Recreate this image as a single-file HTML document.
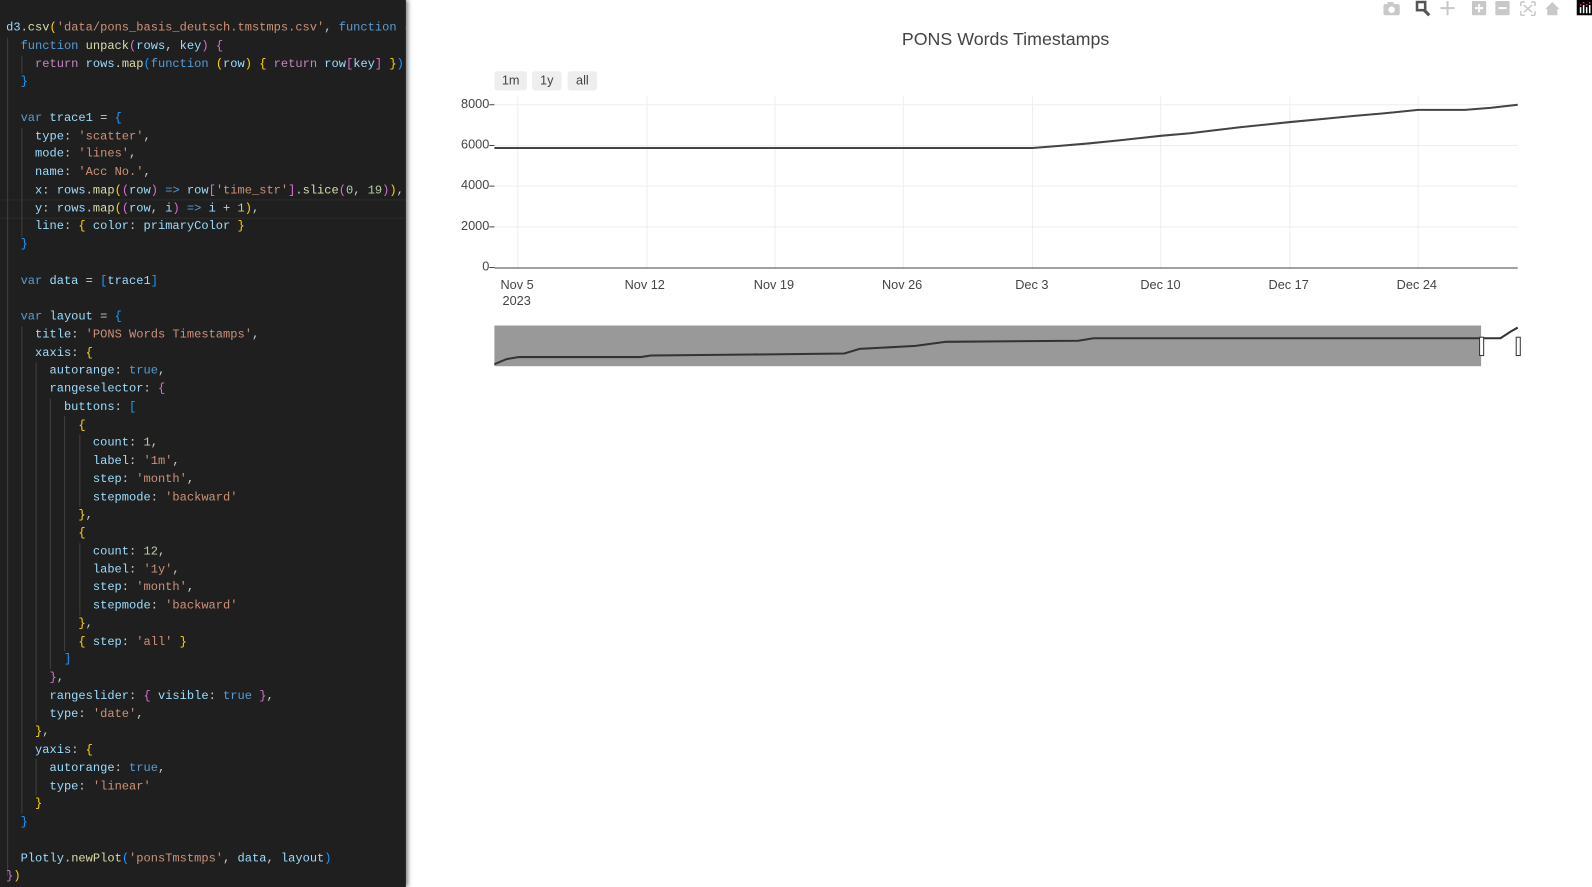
<!DOCTYPE html>
<html><head><meta charset="utf-8"><style>
html,body{margin:0;width:1592px;height:887px;overflow:hidden;background:#fff}
#wrap{position:absolute;left:0;top:0;width:1565px;height:872px;transform:scale(1.01725);transform-origin:0 0;font-family:"Liberation Sans",sans-serif}
#ed{position:absolute;left:0;top:0;width:399px;height:872px;background:#1f1f1f;box-shadow:2px 0 4px rgba(0,0,0,.5);overflow:hidden}
pre{margin:0;position:absolute;left:6px;top:19px;font:11.85px/17.75px "Liberation Mono",monospace;color:#cccccc;white-space:pre}
.hl{position:absolute;left:0;top:196px;width:399px;height:17px;border-top:1px solid #2c2c2c;border-bottom:1px solid #2c2c2c}
.c{color:#569cd6}.p{color:#9cdcfe}.s{color:#ce9178}.n{color:#b5cea8}.f{color:#dcdcaa}.y{color:#ffd700}.m{color:#da70d6}.b{color:#179fff}.r{color:#c586c0}
.g{position:absolute;width:1px;background:#404040}
.t{position:absolute;font-size:12.5px;color:#444;white-space:nowrap}
.btn{position:absolute;top:70px;height:19px;background:#eee;border-radius:3px;font-size:12.5px;color:#444;text-align:center;line-height:19px}
</style></head><body><div id="wrap">
<div id="ed">
<div class="hl"></div>
<div class="g" style="left:7px;top:37px;height:824px"></div>
<div class="g" style="left:21px;top:55px;height:17px"></div>
<div class="g" style="left:21px;top:126px;height:107px"></div>
<div class="g" style="left:21px;top:321px;height:479px"></div>
<div class="g" style="left:35px;top:356px;height:354px"></div>
<div class="g" style="left:35px;top:746px;height:36px"></div>
<div class="g" style="left:49px;top:392px;height:266px"></div>
<div class="g" style="left:63px;top:409px;height:231px"></div>
<div class="g" style="left:78px;top:427px;height:71px"></div>
<div class="g" style="left:78px;top:534px;height:71px"></div>
<pre><span class="p">d3</span>.<span class="f">csv</span><span class="y">(</span><span class="s">'data/pons_basis_deutsch.tmstmps.csv'</span>, <span class="c">function</span> <span class="m">(</span><span class="p">rows</span><span class="m">)</span>
  <span class="c">function</span> <span class="f">unpack</span><span class="m">(</span><span class="p">rows</span>, <span class="p">key</span><span class="m">)</span> <span class="m">{</span>
    <span class="r">return</span> <span class="p">rows</span>.<span class="f">map</span><span class="b">(</span><span class="c">function</span> <span class="y">(</span><span class="p">row</span><span class="y">)</span> <span class="y">{</span> <span class="r">return</span> <span class="p">row</span><span class="m">[</span><span class="p">key</span><span class="m">]</span> <span class="y">}</span><span class="b">)</span>
  <span class="b">}</span>

  <span class="c">var</span> <span class="p">trace1</span> = <span class="b">{</span>
    <span class="p">type</span>: <span class="s">'scatter'</span>,
    <span class="p">mode</span>: <span class="s">'lines'</span>,
    <span class="p">name</span>: <span class="s">'Acc No.'</span>,
    <span class="p">x</span>: <span class="p">rows</span>.<span class="f">map</span><span class="y">(</span><span class="m">(</span><span class="p">row</span><span class="m">)</span> <span class="c">=&gt;</span> <span class="p">row</span><span class="m">[</span><span class="s">'time_str'</span><span class="m">]</span>.<span class="f">slice</span><span class="m">(</span><span class="n">0</span>, <span class="n">19</span><span class="m">)</span><span class="y">)</span>,
    <span class="p">y</span>: <span class="p">rows</span>.<span class="f">map</span><span class="y">(</span><span class="m">(</span><span class="p">row</span>, <span class="p">i</span><span class="m">)</span> <span class="c">=&gt;</span> <span class="p">i</span> + <span class="n">1</span><span class="y">)</span>,
    <span class="p">line</span>: <span class="y">{</span> <span class="p">color</span>: <span class="p">primaryColor</span> <span class="y">}</span>
  <span class="b">}</span>

  <span class="c">var</span> <span class="p">data</span> = <span class="b">[</span><span class="p">trace1</span><span class="b">]</span>

  <span class="c">var</span> <span class="p">layout</span> = <span class="b">{</span>
    <span class="p">title</span>: <span class="s">'PONS Words Timestamps'</span>,
    <span class="p">xaxis</span>: <span class="y">{</span>
      <span class="p">autorange</span>: <span class="c">true</span>,
      <span class="p">rangeselector</span>: <span class="m">{</span>
        <span class="p">buttons</span>: <span class="b">[</span>
          <span class="y">{</span>
            <span class="p">count</span>: <span class="n">1</span>,
            <span class="p">label</span>: <span class="s">'1m'</span>,
            <span class="p">step</span>: <span class="s">'month'</span>,
            <span class="p">stepmode</span>: <span class="s">'backward'</span>
          <span class="y">}</span>,
          <span class="y">{</span>
            <span class="p">count</span>: <span class="n">12</span>,
            <span class="p">label</span>: <span class="s">'1y'</span>,
            <span class="p">step</span>: <span class="s">'month'</span>,
            <span class="p">stepmode</span>: <span class="s">'backward'</span>
          <span class="y">}</span>,
          <span class="y">{</span> <span class="p">step</span>: <span class="s">'all'</span> <span class="y">}</span>
        <span class="b">]</span>
      <span class="m">}</span>,
      <span class="p">rangeslider</span>: <span class="m">{</span> <span class="p">visible</span>: <span class="c">true</span> <span class="m">}</span>,
      <span class="p">type</span>: <span class="s">'date'</span>,
    <span class="y">}</span>,
    <span class="p">yaxis</span>: <span class="y">{</span>
      <span class="p">autorange</span>: <span class="c">true</span>,
      <span class="p">type</span>: <span class="s">'linear'</span>
    <span class="y">}</span>
  <span class="b">}</span>

  <span class="p">Plotly</span>.<span class="f">newPlot</span><span class="b">(</span><span class="s">'ponsTmstmps'</span>, <span class="p">data</span>, <span class="p">layout</span><span class="b">)</span>
<span class="m">}</span><span class="y">)</span></pre>
</div>

<svg style="position:absolute;left:0;top:0" width="1565" height="872">
<g fill="#c8c8c8">
<rect x="1360" y="4" width="16" height="11" rx="2"/><circle cx="1368" cy="9.5" r="3.2" fill="#fff"/><rect x="1364" y="2" width="6" height="3"/>
<rect x="1447" y="1" width="14" height="14" rx="1"/><rect x="1470" y="1" width="14" height="14" rx="1"/>
<path d="M1519 9 L1526 2 L1533 9 L1531 9 L1531 15 L1521 15 L1521 9Z"/>
</g>
<g stroke="#c8c8c8" stroke-width="2" fill="none"><path d="M1423 1v14M1416 8h14"/><path d="M1495 2h4M1495 2v4M1509 2h-4M1509 2v4M1495 15h4M1495 15v-4M1509 15h-4M1509 15v-4M1498 5l8 7M1506 5l-8 7" stroke-width="1.5"/></g>
<g stroke="#fff" stroke-width="2"><path d="M1450 8h8M1454 4v8M1473 8h8"/></g>
<rect x="1393" y="2" width="8" height="8" fill="none" stroke="#555" stroke-width="2.5"/><path d="M1400 10l5 5" stroke="#555" stroke-width="3"/>
<rect x="1550" y="0" width="15" height="15" fill="#000"/>
<g fill="#fff"><rect x="1553" y="7" width="1.5" height="6"/><rect x="1556" y="5" width="1.5" height="8"/><rect x="1559" y="7" width="1.5" height="6"/><rect x="1562" y="5" width="1.5" height="8"/></g>
<g fill="#e6336b"><rect x="1553" y="4" width="1.5" height="1.5"/><rect x="1559" y="4" width="1.5" height="1.5"/><rect x="1556" y="2" width="1.5" height="1.5"/><rect x="1562" y="2" width="1.5" height="1.5"/></g>

<g stroke="#eee" stroke-width="1">
<path d="M509 95V263M636 95V263M762 95V263M888 95V263M1015 95V263M1141 95V263M1268 95V263M1394 95V263"/>
<path d="M486 103H1492M486 143H1492M486 183H1492M486 223H1492"/>
</g>
<path d="M486 263.5H1492" stroke="#444" stroke-width="1"/>
<path d="M481 103H486M481 143H486M481 183H486M481 223H486M481 263H486" stroke="#444"/>
<polyline fill="none" stroke="#444" stroke-width="2" points="486,145.5 1015,145.5 1040,143.5 1070,141 1100,138 1141,133.5 1170,131 1190,128.5 1220,125 1268,120 1300,117 1330,114 1360,111.5 1394,108 1440,108 1465,106 1492,103"/>
<rect x="486" y="320" width="970" height="40" fill="#999"/>
<polyline fill="none" stroke="#333" stroke-width="2" points="486,358 498,353 510,351 630,351 640,349.5 740,348.5 830,347.5 845,343 900,340 930,336 1060,335 1075,332.5 1460,332.5 1475,332.5 1485,326 1492,322"/>
<rect x="1454.5" y="331.5" width="4" height="18" fill="#fff" stroke="#333"/>
<rect x="1490.5" y="331.5" width="4" height="18" fill="#fff" stroke="#333"/>
</svg>
<div class="t" style="left:0;width:1977px;text-align:center;top:28px;font-size:17.5px">PONS Words Timestamps</div>
<div class="btn" style="left:486px;width:32px">1m</div>
<div class="btn" style="left:523px;width:29px">1y</div>
<div class="btn" style="left:558px;width:29px">all</div>
<div class="t" style="right:1084px;top:95px">8000</div>
<div class="t" style="right:1084px;top:135px">6000</div>
<div class="t" style="right:1084px;top:175px">4000</div>
<div class="t" style="right:1084px;top:215px">2000</div>
<div class="t" style="right:1084px;top:255px">0</div>
<div class="t" style="left:492px;top:273px">Nov 5</div>
<div class="t" style="left:494px;top:289px">2023</div>
<div class="t" style="left:614px;top:273px">Nov 12</div>
<div class="t" style="left:741px;top:273px">Nov 19</div>
<div class="t" style="left:867px;top:273px">Nov 26</div>
<div class="t" style="left:998px;top:273px">Dec 3</div>
<div class="t" style="left:1121px;top:273px">Dec 10</div>
<div class="t" style="left:1247px;top:273px">Dec 17</div>
<div class="t" style="left:1373px;top:273px">Dec 24</div>
</div></body></html>
